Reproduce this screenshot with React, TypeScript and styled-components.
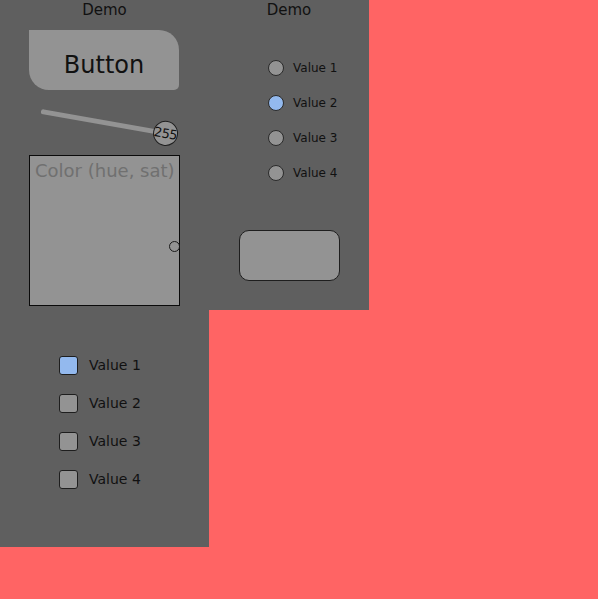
import React from "react";
import styled, { createGlobalStyle } from "styled-components";

const Global = createGlobalStyle`
  html, body { margin: 0; padding: 0; background: #ff6464; }
  body { font-family: "DejaVu Sans", sans-serif; color: #111111; }
`;

const Layout = styled.div`
  display: grid;
  grid-template-columns: 209px 160px;
  grid-template-rows: 310px 237px;
`;

const Cell = styled.div`
  background: #5f5f5f;
  display: flex;
  flex-direction: column;
  position: relative;
`;

const Header = styled.div`
  height: 30px;
  box-sizing: border-box;
  padding-top: 2px;
  font-size: 15px;
  line-height: 17px;
  text-align: center;
`;

const BigButton = styled.div`
  margin-left: 29px;
  width: 150px;
  height: 60px;
  box-sizing: border-box;
  padding-top: 9px;
  background: #939393;
  border-radius: 0 20px 5px 20px;
  display: flex;
  align-items: center;
  justify-content: center;
  font-size: 24px;
`;

const Slider = styled.div`
  margin: 21px 0 0 40px;
  width: 139px;
  height: 24px;
  display: flex;
  align-items: center;
  transform: rotate(10deg);
`;

const Track = styled.div`
  flex: 1;
  height: 5px;
  border-radius: 3px;
  background: #939393;
`;

const Handle = styled.div`
  width: 25px;
  height: 25px;
  margin-left: -12px;
  box-sizing: border-box;
  border-radius: 50%;
  border: 1px solid #1e1e1e;
  background: #939393;
  display: flex;
  align-items: center;
  justify-content: center;
  font-size: 13px;
  letter-spacing: -0.5px;
`;

const ColorBox = styled.div`
  margin: 20px 0 0 29px;
  width: 151px;
  height: 151px;
  box-sizing: border-box;
  border: 1px solid #0a0a0a;
  background: #939393;
  position: relative;
  padding: 4px 0 0 5px;
  font-size: 18px;
  color: #707070;
  white-space: nowrap;
`;

const Picker = styled.div`
  position: absolute;
  right: -1px;
  top: 85px;
  width: 11px;
  height: 11px;
  box-sizing: border-box;
  border-radius: 50%;
  border: 1px solid #1a1a1a;
`;

const RadioList = styled.div`
  display: flex;
  flex-direction: column;
  padding: 20px 0 0 59px;
`;

const Row = styled.div<{ $h: number; $gap: number }>`
  height: ${(p) => p.$h}px;
  display: flex;
  align-items: center;
  gap: ${(p) => p.$gap}px;
`;

const RadioDot = styled.div<{ $on?: boolean }>`
  width: 16px;
  height: 16px;
  box-sizing: border-box;
  border-radius: 50%;
  border: 1px solid #2a2a2a;
  background: ${(p) => (p.$on ? "#93b9ee" : "#939393")};
`;

const Label = styled.span<{ $size: number }>`
  font-size: ${(p) => p.$size}px;
`;

const Panel = styled.div`
  margin: 40px 0 0 30px;
  width: 101px;
  height: 51px;
  box-sizing: border-box;
  border: 1px solid #1e1e1e;
  border-radius: 10px;
  background: #939393;
`;

const CheckList = styled.div`
  display: flex;
  flex-direction: column;
  padding: 36px 0 0 59px;
`;

const Box = styled.div<{ $on?: boolean }>`
  width: 19px;
  height: 19px;
  box-sizing: border-box;
  border-radius: 3px;
  border: 1px solid #1e1e1e;
  background: ${(p) => (p.$on ? "#93b9ee" : "#939393")};
`;

const values = ["Value 1", "Value 2", "Value 3", "Value 4"];

export default function App() {
  return (
    <>
      <Global />
      <Layout>
        <Cell>
          <Header>Demo</Header>
          <BigButton>Button</BigButton>
          <Slider>
            <Track />
            <Handle>255</Handle>
          </Slider>
          <ColorBox>
            Color (hue, sat)
            <Picker />
          </ColorBox>
        </Cell>
        <Cell>
          <Header>Demo</Header>
          <RadioList>
            {values.map((v, i) => (
              <Row key={v} $h={35} $gap={9}>
                <RadioDot $on={i === 1} />
                <Label $size={12}>{v}</Label>
              </Row>
            ))}
          </RadioList>
          <Panel />
        </Cell>
        <Cell>
          <CheckList>
            {values.map((v, i) => (
              <Row key={v} $h={38} $gap={11}>
                <Box $on={i === 0} />
                <Label $size={14}>{v}</Label>
              </Row>
            ))}
          </CheckList>
        </Cell>
      </Layout>
    </>
  );
}
